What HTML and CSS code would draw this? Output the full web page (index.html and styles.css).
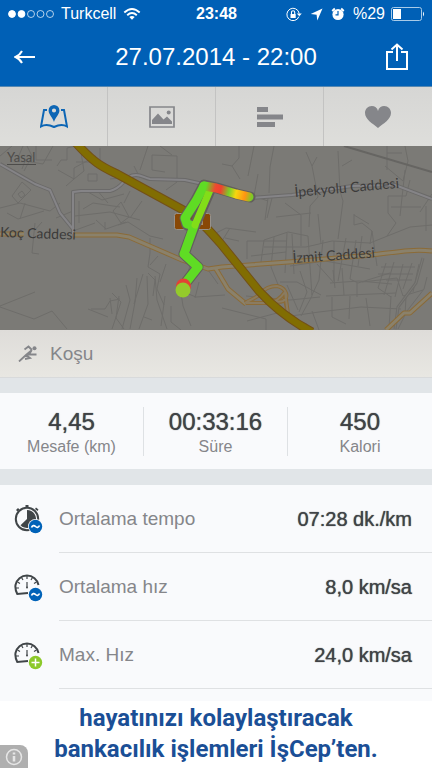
FILE: index.html
```
<!DOCTYPE html>
<html lang="tr">

<head>
    <meta charset="UTF-8">
    <meta name="viewport" content="width=device-width, initial-scale=1.0">
    <title>27.07.2014 - 22:00</title>
    <link rel="stylesheet" href="styles.css">
</head>

<body>
    <header class="top">
        <div class="status-bar">
            <div class="status-left">
                <svg width="46" height="10" viewBox="0 0 46 10" fill="#fff" stroke="#fff">
                    <circle cx="4" cy="5" r="3.4" />
                    <circle cx="13.500" cy="5" r="3.400" />
                    <g fill="none" stroke-width=".7">
                        <circle cx="23" cy="5" r="3.5" />
                        <circle cx="32.500" cy="5" r="3.500" />
                        <circle cx="42" cy="5" r="3.5" />
                    </g>
                </svg>
                <span>Turkcell</span>
                <svg class="wifi" width="18" height="14" viewBox="0 0 18 14" fill="none" stroke="#fff" stroke-width="1.9">
                    <path d="M1.300 5.500Q9-1.500 16.700 5.500M4.200 8.300Q9 3.900 13.800 8.300" />
                    <path d="M6.300 10Q9 7.800 11.700 10L9 12.800z" fill="#fff" stroke="none" />
                </svg>
            </div>
            <span class="clock">23:48</span>
            <div class="status-right">
                <div class="status-icons">
                    <svg width="16" height="15" viewBox="0 0 16 15" fill="none" stroke="#fff">
                        <path d="M12.900 9.600A6.200 6.200 0 1 1 13.200 6.500" stroke-width="1" />
                        <path d="M10.800 6.500h5l-2.500 2.800z" fill="#fff" stroke="none" />
                        <path d="M4.500 7h5.200v4H4.500z" fill="#fff" stroke="none" />
                        <path d="M5.500 7V5.300a1.600 1.600 0 0 1 3.200 0V7" stroke-width="1.1" />
                    </svg>
                    <svg width="13" height="13" viewBox="0 0 13 13" fill="#fff">
                        <path d="M12.500.5L7.300 12.500 6.600 6.700.7 6z" />
                    </svg>
                    <svg width="14" height="14" viewBox="0 0 14 14">
                        <circle cx="7" cy="7.500" r="5.600" fill="#fff" />
                        <path d="M1.200 4L3.800 1.500M12.800 4L10.200 1.500" stroke="#fff" stroke-width="1.8" />
                        <path d="M7 4v3.800H4.500" fill="none" stroke="#0060b6" stroke-width="1.200" />
                    </svg>
                </div>
                <span>%29</span>
                <svg width="34" height="14" viewBox="0 0 34 14">
                    <rect x=".5" y=".5" width="30" height="13" rx="2" fill="none" stroke="#a9cbe8" />
                    <path d="M2 2h8v10H2z" fill="#fff" />
                    <path d="M32 4.500q2 2.500 0 5z" fill="#fff" />
                </svg>
            </div>
        </div>
        <div class="nav-bar">
            <button type="button" aria-label="Geri">
                <svg width="22" height="14" viewBox="0 0 22 14" fill="none" stroke="#fff" stroke-width="2">
                    <path d="M21 7H2M8 1Q6 5 1.500 7 6 9 8 13" />
                </svg>
            </button>
            <h1>27.07.2014 - 22:00</h1>
            <button type="button" aria-label="Paylaş">
                <svg width="22" height="28" viewBox="0 0 22 28" fill="none" stroke="#fff" stroke-width="2">
                    <path d="M7 9H1v17h20V9h-6M11 18V2M5.500 6.500L11 1.500l5.500 5" />
                </svg>
            </button>
        </div>
    </header>

    <nav class="tabs">
        <button type="button" aria-label="Harita">
            <svg width="28" height="24" viewBox="0 0 28 24">
                <path d="M7 5H4L1 21.500c4-2.500 9-1.500 13 .5 4-2 9-3 13-.5L24 5h-3" fill="none" stroke="#0d66b5" stroke-width="2" />
                <path fill-rule="evenodd" d="M14 0a5.400 5.400 0 0 0-5.400 5.400C8.600 9.300 12.500 12 14 17c1.500-5 5.400-7.700 5.400-11.600A5.400 5.400 0 0 0 14 0zm0 3.400a2.100 2.100 0 1 1 0 4.200 2.100 2.100 0 0 1 0-4.200z" fill="#0d66b5" />
            </svg>
        </button>
        <button type="button" aria-label="Fotoğraflar">
            <svg width="26" height="22" viewBox="0 0 26 22" fill="#85868a">
                <path d="M1 1h24v20H1z" fill="none" stroke="#85868a" stroke-width="1.700" />
                <circle cx="19.700" cy="6.500" r="2" />
                <path d="M3 18v-4l6-6.500 5.500 6 3.500-3 5 5V18z" />
            </svg>
        </button>
        <button type="button" aria-label="Turlar">
            <svg width="26" height="20" viewBox="0 0 26 20" fill="#85868a">
                <path d="M0 0h11v5H0zM0 7.500h26v5H0zM0 15h18v5H0z" />
            </svg>
        </button>
        <button type="button" aria-label="Nabız">
            <svg width="28" height="24" viewBox="0 0 28 24" fill="#85868a">
                <path d="M14 6C13.300 2.600 10.800 1 7.800 1 4 1 1 4 1 7.800 1 14.500 8.500 18.500 14 23c5.500-4.500 13-8.500 13-15.200C27 4 24 1 20.200 1c-3 0-5.500 1.600-6.200 5z" />
            </svg>
        </button>
    </nav>

    <svg class="map" viewBox="0 0 432 184">
        <defs>
            <linearGradient id="pace" x1="206" y1="40" x2="252" y2="51" gradientUnits="userSpaceOnUse">
                <stop offset="0" stop-color="#5fdc24" />
                <stop offset=".2" stop-color="#ef4930" />
                <stop offset=".32" stop-color="#f0402f" />
                <stop offset=".5" stop-color="#78cf2a" />
                <stop offset=".65" stop-color="#f6d60f" />
                <stop offset=".85" stop-color="#ff9412" />
                <stop offset="1" stop-color="#7acb25" />
            </linearGradient>
        </defs>
        <rect width="432" height="184" fill="#7b7a76" />
        <!-- side streets -->
        <g fill="none" stroke="#6e6d6a" stroke-width="1">
            <path d="M0 10l12-10M17 14l6-14M22 23l3-8 18 3 10-18M27 0l5 10-8 15M36 0v14h16M57 20l4-6h6V2l9-2M58 24l16 9 10-8-4-25M76 16h24V2M74 33V22l22-12M88 28h9v7h-9zM66 40l8-7M79 55v22M88 46l14 8 22-6M96 43l12 14M110 33l24-2M112 22l15 9M134 20l6 12M148 0l-8 24M152 9l25 1v26l-11 8M152 9v15l13 2M160 0l12 9" />
            <path d="M12 50l10-14 9 8-13 13zM18 48l4-3 3 4-4 3zM0 62l20-5 30 8 10-8M25 57l-5 16M7 67l11 6 26-8M35 77l-3 30 7 1M42 76l-8 9M56 72l17-7M75 70l35-4 30 8M83 63l10-6 27 4M113 65l8-9 8 15-8 6zM124 57l6-12M130 72l12-17M96 74l10 9 20-7M118 79l10-3 22 14 13 3M150 92v15l-2 14 12 7-3 15 7 16M158 110l-8 9M166 118l-6 18M105 76v8M73 85l22-8" />
            <path d="M88 163l20 8M91 163h14l5-8 10-2M110 152l2 16M112 147l9 9-9 27M119 150l-3 22 8 11M126 139l4 15-8 29M137 132l-2 24-5 27M147 130l1 28-9 25M155 130l2 24 10 29M143 128l-9 30M165 150l-4 30M148 127l7 7-2 16M171 160v16l10 8M176 143l20 8 29-2M180 140l3 20 8 20M190 120l-7 20M199 136l-4 16M0 160l35-14M206 121l12 17M144 171l8 3" />
            <path d="M239 0v12l-7 8 8 13M232 20l-10-2M254 0l-6 30M258 28l-4 22 14 5M268 52l-3 22M272 52l-5 20M274 0l-4 21-1 26M276 71l35-4M306 6l6 14 5-9M312 20l6 31-8 9-1 21M338 5l2 40 3 10-5 38M342 20l10-6M387 0v24M387 7h15M385 20l18 15 5-20-3-15M405 24l-5 46M388 50h18l4-16M388 50v17l8 10-9 13M391 61h30M420 66l12-18M354 68v11l8-2 10 8-2 13M354 69l15 9M318 68l3 30M285 57l16 12v31" />
            <path d="M216 87l10-5 30 4M225 92l14 3M230 82l-8 13M264 94l24-8 20 4M264 94l-3 22M264 101h42l26-6 38 2 40-16 22-2M274 91l-3 30 8 20M287 87l-2 40M292 88l2 40M308 90l4 60-11 20M323 94l-4 40-7 15M334 95v40M346 92l-8 43M356 94l-6 39 8 4 32-10M362 90l-4 30M372 85l5 35M426 60v25" />
            <path d="M247 113v-18h40M251 110l35-4M290 120l35-5 45 8M280 136h17l24 13M300 125l7 21-8 20M317 118l18 20M333 124l2 18M342 122l2 27M357 137v14M362 136l35-4 6 18 20-6M330 137l29-2 33 3M326 150l70-3M386 117l-8 25 13 9M394 116l-10 33M403 118l-8 33M412 117l-9 26M419 118l-6 28M381 121h34M378 128h35M386 134h26M332 151v20l14 7M350 150l-1 23M366 152l4 28M391 150l-2 32M406 151l-1 18-15 14M291 170l28-4 42-5 40 2M312 165l7 19M298 164l-11-25M246 150l44 4 30-3M0 161l34 12 18-8 15 18M222 162l44 11v11M247 175l30-8 30 11M427 131l-3 12-17 22-9 18" />
        </g>
        <path d="M344 0l88 26" fill="none" stroke="#666562" stroke-width="2" />
        <path d="M423 112l-7 25-18 24-3 22" fill="none" stroke="#6e6d6a" stroke-width="3" />
        <path d="M423 112l-7 25-18 24-3 22" fill="none" stroke="#7b7a76" />
        <!-- grey main roads -->
        <g fill="none" stroke-linejoin="round">
            <path d="M0 18l35 20 15 6 10 23 13 16M73 88V46l8-1h29c14-3 14-16 26-16 6 0 8 3 14 4l35 1 18 4M252 52l40-3 60-9 43-1 37 14" stroke="#6b6a69" stroke-width="4" />
            <path d="M0 18l35 20 15 6 10 23 13 16M73 88V46l8-1h29c14-3 14-16 26-16 6 0 8 3 14 4l35 1 18 4M252 52l40-3 60-9 43-1 37 14" stroke="#858487" stroke-width="2" />
        </g>
        <!-- orange roads -->
        <g fill="none" stroke-linejoin="round">
            <path d="M0 88h24M73 89h44l12 2 53 23 26 9 14-2 80-6 70-6c25-3 40-6 60-4M216 123l12 20 18 15M386 184l18-17h6l22-20" stroke="#8b6b38" stroke-width="5" />
            <path d="M0 88h24M73 89h44l12 2 53 23 26 9 14-2 80-6 70-6c25-3 40-6 60-4M216 123l12 20 18 15M386 184l18-17h6l22-20" stroke="#8a816b" stroke-width="3" />
            <path d="M245 157c6-4 10-4 15-9 4-5 10-8 17-8 10 2 12 12 6 15-6 2-12 0-18-7M246 157h20c10-1 14-4 19-11l3 22M284 148l4 20" stroke="#8b6b38" stroke-width="4" />
            <path d="M245 157c6-4 10-4 15-9 4-5 10-8 17-8 10 2 12 12 6 15-6 2-12 0-18-7M246 157h20c10-1 14-4 19-11l3 22" stroke="#8a7b60" stroke-width="2" />
            <path d="M76-3c20 22 27 24 43 32l66 36c17 11 23 18 36 33l38 47c19 21 38 33 53 41" stroke="#735018" stroke-width="9" />
            <path d="M76-3c20 22 27 24 43 32l66 36c17 11 23 18 36 33l38 47c19 21 38 33 53 41" stroke="#816d02" stroke-width="7" />
        </g>
        <rect x="174.500" y="67.500" width="36" height="16" rx="2" fill="#894806" stroke="#97918a" />
        <path d="M200 75h3M202 73v6" stroke="#b9a78e" stroke-width="1.500" />
        <!-- route -->
        <g fill="none" stroke-linecap="round" stroke-linejoin="round">
            <path d="M250 51l-13-3-20-6-13-3-8 15-11 18 2 7 7 2-10 27 14 13-11 14M210 44l-18 42" stroke="#625f5b" stroke-width="11" />
            <path d="M204 40l-8 15-11 17 2 6 7 2-10 28 14 13-11 14" stroke="#5fdc24" stroke-width="9" />
            <path d="M210 44l-15 35" stroke="#82de18" stroke-width="7" />
            <path d="M204 40l12 2 20 6 13 3" stroke="url(#pace)" stroke-width="9" />
        </g>
        <circle cx="183.500" cy="140" r="7.500" fill="#e34235" />
        <circle cx="183" cy="144" r="7.500" fill="#94ca2c" />
        <!-- labels -->
        <g class="map-labels">
            <text class="legal" x="7" y="16">Yasal</text>
            <path d="M7 18.500h29" stroke="#4d4c4a" />
            <text x="0" y="91" transform="rotate(2 0 91)">Koç Caddesi</text>
            <text x="295" y="51" transform="rotate(-5 295 51)">İpekyolu Caddesi</text>
            <text x="293" y="117" transform="rotate(-4 293 117)">İzmit Caddesi</text>
        </g>
    </svg>

    <section class="activity">
        <svg width="20" height="17" viewBox="0 0 20 17" fill="none" stroke="#85868a" stroke-width="1.800">
            <circle cx="16.500" cy="3.300" r="2" fill="#85868a" stroke="none" />
            <path d="M6.500 4.500l4-3L14 5M14 5l-6 5-7 6.500M8 10l4 3-5 1M13.500 5.500L11 9.500h7.500" />
        </svg>
        <span>Koşu</span>
    </section>

    <section class="summary">
        <div class="summary-item">
            <strong>4,45</strong>
            <span>Mesafe (km)</span>
        </div>
        <div class="summary-item">
            <strong>00:33:16</strong>
            <span>Süre</span>
        </div>
        <div class="summary-item">
            <strong>450</strong>
            <span>Kalori</span>
        </div>
    </section>

    <ul class="details">
        <li>
            <svg width="30" height="30" viewBox="0 0 30 30">
                <circle cx="13" cy="15" r="11.200" fill="none" stroke="#404548" stroke-width="2" />
                <path d="M11.500 1h3v3h-3zM2 6l2-2 1.500 1.500-2 2zM21 5l1-1.500 2.500 2-1 1.500z" fill="#404548" />
                <path d="M13 15V6a9 9 0 1 1-6.500 15.200z" fill="#404548" />
                <circle cx="21.500" cy="22.500" r="7.500" fill="#f9fafc" />
                <circle cx="21.500" cy="22.500" r="6.700" fill="#0062b8" />
                <path d="M17.500 23.500c1-2.300 2.700-2.300 4-1s3 1.300 4-1" fill="none" stroke="#fff" stroke-width="1.700" />
            </svg>
            <span class="label">Ortalama tempo</span>
            <span class="value">07:28 dk./km</span>
        </li>
        <li>
            <svg width="30" height="30" viewBox="0 0 30 30">
                <path d="M24.500 13A11.700 11.700 0 0 0 1.500 13c-.5 3.500.2 6 1.800 9L14 21" fill="none" stroke="#404548" stroke-width="2" />
                <path d="M13 4v3M7.500 5.500L9 8M18.500 5.500L17 8M3.500 10L6 11.500M22.500 10L20 11.500M2 16h3M13 10v5" fill="none" stroke="#404548" stroke-width="1.200" />
                <circle cx="13" cy="15.500" r="1" fill="#404548" />
                <circle cx="21.500" cy="22.500" r="7.500" fill="#f9fafc" />
                <circle cx="21.500" cy="22.500" r="6.700" fill="#0062b8" />
                <path d="M17.500 23.500c1-2.300 2.700-2.300 4-1s3 1.300 4-1" fill="none" stroke="#fff" stroke-width="1.700" />
            </svg>
            <span class="label">Ortalama hız</span>
            <span class="value">8,0 km/sa</span>
        </li>
        <li>
            <svg width="30" height="30" viewBox="0 0 30 30">
                <path d="M24.500 13A11.700 11.700 0 0 0 1.500 13c-.5 3.500.2 6 1.800 9L14 21" fill="none" stroke="#404548" stroke-width="2" />
                <path d="M13 4v3M7.500 5.500L9 8M18.500 5.500L17 8M3.500 10L6 11.500M22.500 10L20 11.500M2 16h3M13 10v5" fill="none" stroke="#404548" stroke-width="1.200" />
                <circle cx="13" cy="15.500" r="1" fill="#404548" />
                <circle cx="21.500" cy="22.500" r="7.500" fill="#f9fafc" />
                <circle cx="21.500" cy="22.500" r="6.700" fill="#8cc92a" />
                <path d="M17.500 22.500h8M21.500 18.500v8" fill="none" stroke="#fff" stroke-width="1.500" />
            </svg>
            <span class="label">Max. Hız</span>
            <span class="value">24,0 km/sa</span>
        </li>
    </ul>

    <footer class="ad">
        <p>hayatınızı kolaylaştıracak<br>bankacılık işlemleri İşCep’ten.</p>
        <button type="button" class="ad-info" aria-label="Reklam bilgisi">
            <svg width="18" height="18" viewBox="0 0 18 18" fill="none" stroke="#e6e6e6" stroke-width="1.500">
                <circle cx="9" cy="9" r="7.500" />
                <path d="M9 8v5.500M9 4.500v2" stroke-width="2.500" />
            </svg>
        </button>
    </footer>
</body>

</html>
```
FILE: styles.css
```
/* Global Styles */
* {
    box-sizing: border-box;
}

body {
    margin: 0;
    min-height: 100vh;
    display: flex;
    flex-direction: column;
    font-family: "Liberation Sans", Arial, sans-serif;
    background-color: #f9fafc;
    color: #404346;
}

svg {
    display: block;
    flex-shrink: 0;
}

button {
    margin: 0;
    padding: 0;
    border: none;
    background: none;
    cursor: pointer;
}

/* Header */
.top {
    background-color: #0060b6;
    color: #fff;
    border-bottom: 1px solid #5588b2;
}

.status-bar {
    display: grid;
    grid-template-columns: 1fr auto 1fr;
    align-items: center;
    height: 28px;
    padding: 0 7px 0 8px;
    font-size: 16px;
}

.status-left,
.status-right {
    display: flex;
    align-items: center;
    gap: 6px;
}

.status-left {
    gap: 7px;
}

.status-right {
    justify-content: flex-end;
}

.status-icons {
    display: flex;
    align-items: center;
    gap: 8px;
    margin-right: 2px;
}

.clock {
    font-weight: bold;
}

.nav-bar {
    display: grid;
    grid-template-columns: 1fr auto 1fr;
    align-items: center;
    height: 58px;
    padding: 0 24px 0 14px;
}

.nav-bar button {
    justify-self: start;
}

.nav-bar button:last-child {
    justify-self: end;
}

.nav-bar h1 {
    margin: 0 0 0 10px;
    font-size: 24px;
    font-weight: normal;
}

/* Tabs */
.tabs {
    display: grid;
    grid-template-columns: repeat(4, 1fr);
    height: 59px;
    background: linear-gradient(#d6d6d4, #dededb);
}

.tabs button {
    display: flex;
    align-items: center;
    justify-content: center;
    border-right: 1px solid #c3c3c2;
}

.tabs button:last-child {
    border-right: none;
}

/* Map */
.map {
    width: 100%;
    height: auto;
}

.map-labels {
    font-family: Lato, sans-serif;
    font-size: 14px;
    fill: #3c3b3a;
}

.map-labels .legal {
    font-size: 13px;
    fill: #4d4c4a;
}

/* Activity */
.activity {
    display: flex;
    align-items: center;
    gap: 12px;
    height: 48px;
    padding: 0 18px;
    font-size: 19px;
    color: #85868a;
    background: linear-gradient(#dedcd9, #e8e7e2);
    border-bottom: 1px solid #d8dadb;
}

/* Summary */
.summary {
    display: grid;
    grid-template-columns: repeat(3, 1fr);
    padding: 14px 0 13px;
    border: solid #e1e5e8;
    border-width: 15px 0 16px;
}

.summary-item {
    display: flex;
    flex-direction: column;
    align-items: center;
    height: 49px;
    border-right: 1px solid #dee1e4;
}

.summary-item:last-child {
    border-right: none;
}

.summary-item strong {
    font-size: 24px;
    line-height: 30px;
    font-weight: normal;
    text-shadow: 0 0 1px #404346;
}

.summary-item span {
    font-size: 16px;
    line-height: 20px;
    color: #85868a;
}

/* Details */
.details {
    margin: 0;
    padding: 0 0 12px;
    list-style: none;
    font-size: 19px;
}

.details li {
    display: grid;
    grid-template-columns: 45px 1fr auto;
    align-items: center;
    height: 68px;
    padding: 0 20px 0 14px;
    background: linear-gradient(#dfe1e3, #dfe1e3) right bottom / calc(100% - 59px) 1px no-repeat;
}

.details .label {
    color: #85868a;
}

.details .value {
    font-size: 20px;
    text-shadow: 0 0 1px #404346;
}

/* Ad */
.ad {
    position: relative;
    margin-top: auto;
    padding: 2px 0 4px;
    background-color: #fff;
    text-align: center;
}

.ad p {
    margin: 0;
    font-family: Roboto, sans-serif;
    font-size: 24px;
    line-height: 31px;
    font-weight: bold;
    color: #1b4f96;
}

.ad-info {
    position: absolute;
    left: 0;
    bottom: 0;
    padding: 3px 5px;
    background-color: #afafaf;
    border-top-right-radius: 8px;
}
```
